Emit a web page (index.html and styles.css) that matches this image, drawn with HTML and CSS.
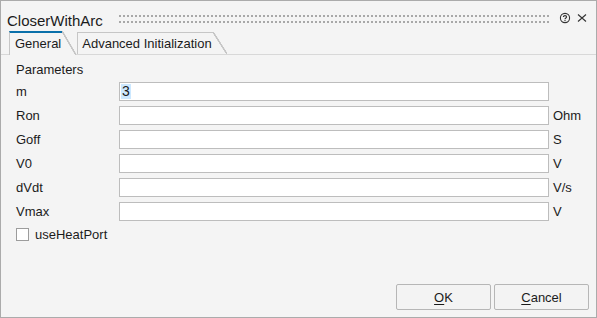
FILE: index.html
```
<!DOCTYPE html>
<html><head>
<meta charset="utf-8">
<title>CloserWithArc</title>
<link rel="stylesheet" href="styles.css">
</head>
<body>

<div class="dialog">
	<div class="titlebar">
		<span class="title">CloserWithArc</span>
		<div class="grip"></div>
		<svg class="tbicon" width="12" height="12" viewBox="0 0 12 12">
			<circle cx="6" cy="6" r="4.6" fill="none" stroke="#333" stroke-width="1.1"/>
			<path d="M4.4 4.9 C4.4 3.2 7.6 3.2 7.6 4.9 C7.6 6 6 6 6 7.2" fill="none" stroke="#333" stroke-width="1.1"/>
			<rect x="5.45" y="8" width="1.1" height="1.1" fill="#333"/>
		</svg>
		<svg class="tbicon close" width="10" height="10" viewBox="0 0 10 10">
			<path d="M1 1.5 L9 8.5 M9 1.5 L1 8.5" stroke="#333" stroke-width="1.1" fill="none"/>
		</svg>
	</div>

	<div class="tabs">
		<a class="tab current">General</a>
		<a class="tab">Advanced Initialization</a>
	</div>

	<div class="page">
		<div class="params">
			<div class="heading">Parameters</div>

			<label>m</label>
			<div class="field"><span class="sel">3</span></div>
			<span class="unit"></span>

			<label>Ron</label>
			<div class="field"></div>
			<span class="unit">Ohm</span>

			<label>Goff</label>
			<div class="field"></div>
			<span class="unit">S</span>

			<label>V0</label>
			<div class="field"></div>
			<span class="unit">V</span>

			<label>dVdt</label>
			<div class="field"></div>
			<span class="unit">V/s</span>

			<label>Vmax</label>
			<div class="field"></div>
			<span class="unit">V</span>

			<div class="check"><span class="box"></span>useHeatPort</div>
		</div>
	</div>

	<div class="buttons">
		<a class="button"><u>O</u>K</a>
		<a class="button"><u>C</u>ancel</a>
	</div>
</div>

</body>
</html>
```
FILE: styles.css
```
body
{
	margin: 0;
	padding: 0;
	font-family: "Liberation Sans", Arial, sans-serif;
	font-size: 13px;
	color: #1b1b1b;
	cursor: default;
}
.dialog
{
	box-sizing: border-box;
	width: 597px;
	height: 318px;
	border: 1px solid #ababab;
	background-color: #f4f4f4;
	display: flex;
	flex-direction: column;
}
.titlebar
{
	box-sizing: border-box;
	height: 30px;
	padding: 4px 9px 0 6px;
	display: flex;
	align-items: center;
}
.title
{
	font-size: 15px;
	line-height: 17px;
	color: #1b1b1b;
	margin-top: 5px;
}
.grip
{
	flex: 1;
	align-self: flex-start;
	height: 8px;
	margin: 10px 10px 0 16px;
	background-image:
		linear-gradient(90deg, #a8a8a8 2px, transparent 2px),
		linear-gradient(90deg, #a8a8a8 2px, transparent 2px);
	background-size: 4px 2px;
	background-repeat: repeat-x;
	background-position: 0 0, 0 6px;
}
.tbicon
{
	display: block;
}
.tbicon.close
{
	margin-left: 6px;
}
.tabs
{
	box-sizing: border-box;
	height: 24px;
	padding-left: 8px;
	display: flex;
	align-items: flex-end;
	border-bottom: 1px solid #d8d8d8;
}
.tab
{
	position: relative;
	line-height: 15px;
	padding: 3px 1px 3px 4px;
	margin-right: 15px;
	border-left: 1px solid #c6c6c6;
	border-top: 1px solid #c6c6c6;
	background-color: #f4f4f4;
	color: #1b1b1b;
	white-space: nowrap;
}
.tab::after
{
	content: "";
	position: absolute;
	top: -1px;
	bottom: 0;
	right: -14px;
	width: 14px;
	background: linear-gradient(to top right, #f4f4f4 calc(50% - 1px), #c6c6c6 calc(50% - 0.6px), #c6c6c6 calc(50% + 0.6px), transparent calc(50% + 1px));
}
.tab.current
{
	padding: 3px 1px 4px 5px;
	margin-bottom: -1px;
	border-top: 2px solid #0a70aa;
	z-index: 1;
}
.tab.current::after
{
	top: -2px;
}
.page
{
	flex: 1;
	padding: 7px 0 0 15px;
}
.params
{
	display: grid;
	grid-template-columns: 99px 430px auto;
	column-gap: 4px;
	row-gap: 5px;
	align-items: center;
}
.params .heading
{
	grid-column: 1 / -1;
	line-height: 15px;
}
.params label
{
	line-height: 15px;
}
.field
{
	box-sizing: border-box;
	height: 19px;
	border: 1px solid #bdbdbd;
	background-color: white;
	padding: 1px 0 0 1px;
	line-height: 15px;
	font-size: 14px;
}
.sel
{
	display: inline-block;
	background-color: #cce8ff;
	padding: 0 1px;
}
.unit
{
	line-height: 15px;
}
.check
{
	grid-column: 1 / -1;
	display: flex;
	align-items: center;
	gap: 6px;
	line-height: 15px;
	margin-top: 1px;
}
.check .box
{
	box-sizing: border-box;
	width: 13px;
	height: 13px;
	border: 1px solid #9c9c9c;
	background-color: white;
}
.buttons
{
	display: flex;
	justify-content: flex-end;
	gap: 3px;
	padding: 0 7px 7px 0;
}
.button
{
	box-sizing: border-box;
	width: 95px;
	height: 26px;
	border: 1px solid #b6b6b6;
	border-radius: 2px;
	background-color: #f3f3f3;
	display: flex;
	align-items: center;
	justify-content: center;
	color: #1b1b1b;
}
.button u
{
	text-underline-offset: 2px;
}
```
